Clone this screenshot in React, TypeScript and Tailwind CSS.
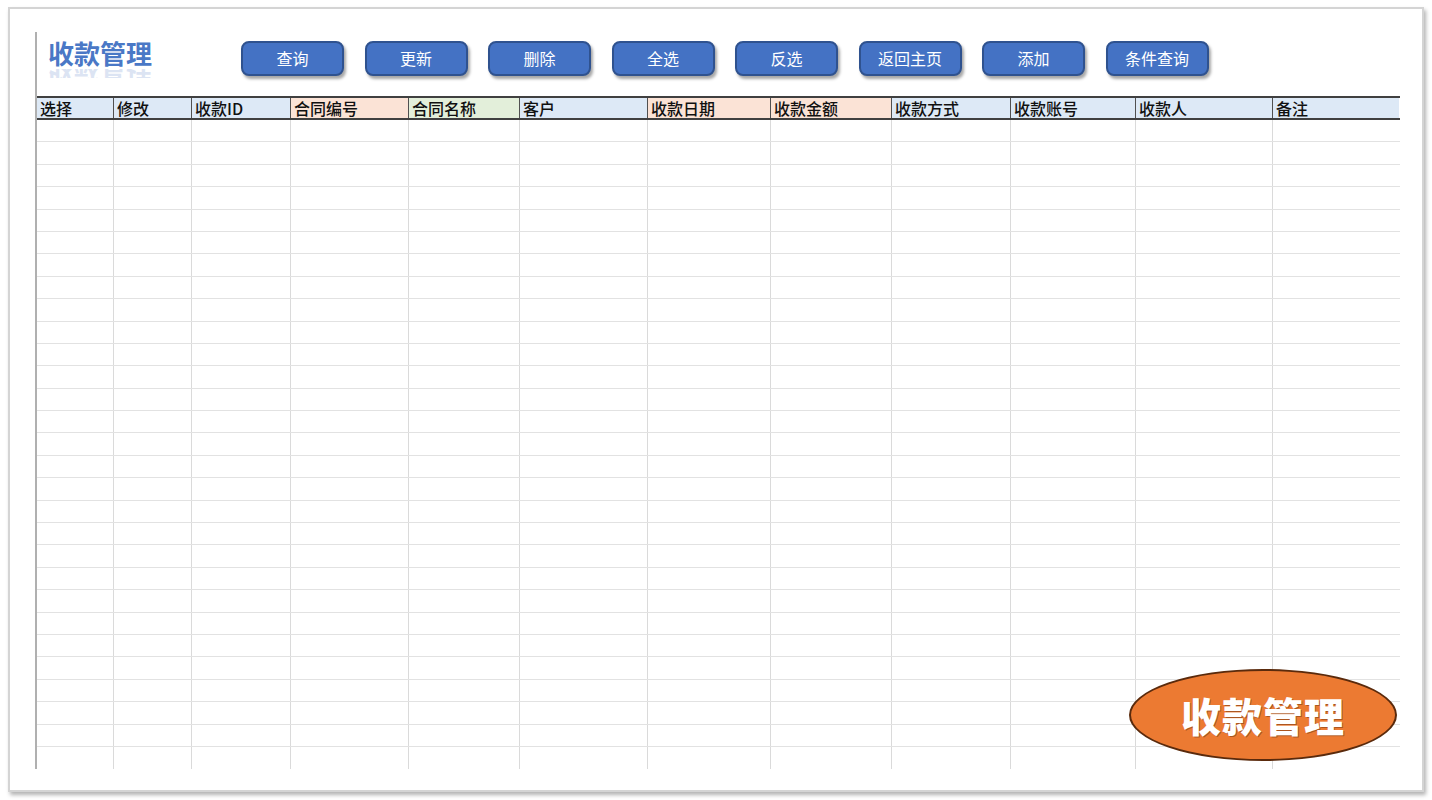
import React from "react";

const buttons = ["查询", "更新", "删除", "全选", "反选", "返回主页", "添加", "条件查询"];

// header columns: label, width class, fill colour class
const columns = [
  { label: "选择", w: "w-[76px]", bg: "bg-[#dde9f6]" },
  { label: "修改", w: "w-[78px]", bg: "bg-[#dde9f6]" },
  { label: "收款ID", w: "w-[99px]", bg: "bg-[#dde9f6]" },
  { label: "合同编号", w: "w-[118px]", bg: "bg-[#fbe3d6]" },
  { label: "合同名称", w: "w-[111px]", bg: "bg-[#e3efda]" },
  { label: "客户", w: "w-[128px]", bg: "bg-[#dde9f6]" },
  { label: "收款日期", w: "w-[123px]", bg: "bg-[#fbe3d6]" },
  { label: "收款金额", w: "w-[121px]", bg: "bg-[#fbe3d6]" },
  { label: "收款方式", w: "w-[119px]", bg: "bg-[#dde9f6]" },
  { label: "收款账号", w: "w-[125px]", bg: "bg-[#dde9f6]" },
  { label: "收款人", w: "w-[137px]", bg: "bg-[#dde9f6]" },
  { label: "备注", w: "w-[127px]", bg: "bg-[#dde9f6]" },
];

const rows = Array.from({ length: 29 });

const font = { fontFamily: '"Noto Sans CJK SC", "Noto Sans", sans-serif' };

export default function App() {
  return (
    <div className="h-[800px] w-[1432px] bg-white pl-[8px] pt-[7px]" style={font}>
      {/* sheet frame */}
      <div className="relative h-[785px] w-[1416px] border-2 border-[#d4d4d4] bg-white shadow-[2px_3px_4px_rgba(0,0,0,0.3)]">
        <div className="ml-[25px] mt-[23px] h-[737px] w-[1365px] border-l-2 border-[#b0b0b0]">
          {/* title + buttons */}
          <div className="flex h-[64px] items-start">
            <div className="w-[204px] pl-[11px] pt-[6px]">
              <div className="text-[26px] font-bold leading-[30px] text-[#4a78c6]">收款管理</div>
              <div className="mt-[1px] h-[9px] overflow-hidden">
                <div className="-scale-y-100 text-[26px] font-bold leading-[20px] text-[#8fa9d9] opacity-30">收款管理</div>
              </div>
            </div>
            <div className="flex gap-[20.5px] pt-[9px]">
              {buttons.map((b) => (
                <button
                  key={b}
                  className="flex h-[35px] w-[103px] items-center justify-center rounded-[8px] border-2 border-[#2f528f] bg-[#4472c4] pb-[2px] text-[16px] text-white shadow-[2px_3px_3px_rgba(0,0,0,0.35)]"
                >
                  {b}
                </button>
              ))}
            </div>
          </div>

          {/* header row */}
          <div className="flex h-[24px] border-y-2 border-[#404040]">
            {columns.map((c, i) => (
              <div
                key={c.label}
                className={`${c.w} ${c.bg} ${i > 0 ? "border-l border-[#505050]" : ""} pl-[3px] text-[16px] font-medium leading-[20px] text-[#111]`}
              >
                {c.label}
              </div>
            ))}
          </div>

          {/* empty body */}
          {rows.map((_, r) => (
            <div key={r} className="flex h-[22.4px] border-b border-[#e2e2e2] last:border-b-0">
              {columns.map((c, i) => (
                <div key={c.label} className={`${c.w} ${i > 0 ? "border-l border-[#dadada]" : ""}`} />
              ))}
            </div>
          ))}
        </div>

        {/* orange badge */}
        <div className="absolute left-[1119px] top-[660px] flex h-[92px] w-[268px] items-center justify-center rounded-[50%] border-2 border-[#5a2a0c] bg-[#ec7a32]">
          <span className="text-[40px] font-black leading-none tracking-[1px] text-white [text-shadow:1px_1px_0_rgba(90,40,10,0.45)]">收款管理</span>
        </div>
      </div>
    </div>
  );
}
